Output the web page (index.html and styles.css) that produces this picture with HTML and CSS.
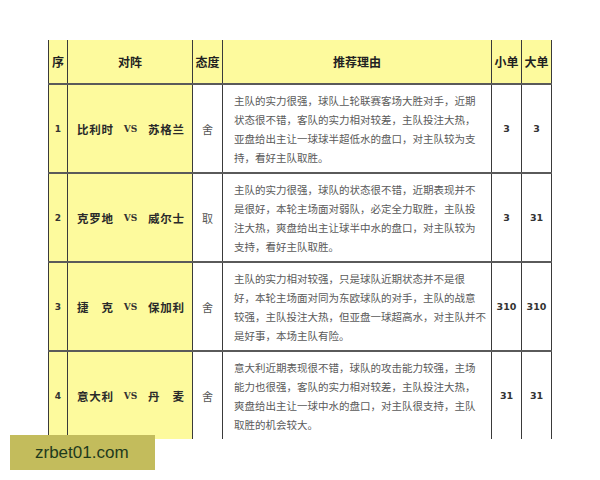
FILE: index.html
```html
<!DOCTYPE html>
<html>
<head>
<meta charset="utf-8">
<link rel="stylesheet" href="styles.css">
</head>
<body>
<div class="page">
  <div class="clip">
    <table class="picks">
      <colgroup>
        <col class="c-no"><col class="c-match"><col class="c-att"><col class="c-reason"><col class="c-small"><col class="c-big">
      </colgroup>
      <thead>
        <tr>
          <th>序</th><th>对阵</th><th>态度</th><th class="hr">推荐理由</th><th>小单</th><th>大单</th>
        </tr>
      </thead>
      <tbody>
        <tr>
          <td class="no">1</td>
          <td class="match"><div class="teams"><span class="team">比利时</span><span class="vs">VS</span><span class="team">苏格兰</span></div></td>
          <td class="att">舍</td>
          <td class="reason">主队的实力很强，球队上轮联赛客场大胜对手，近期<br>状态很不错，客队的实力相对较差，主队投注大热，<br>亚盘给出主让一球球半超低水的盘口，对主队较为支<br>持，看好主队取胜。</td>
          <td class="num">3</td><td class="num">3</td>
        </tr>
        <tr>
          <td class="no">2</td>
          <td class="match"><div class="teams"><span class="team">克罗地</span><span class="vs">VS</span><span class="team">威尔士</span></div></td>
          <td class="att">取</td>
          <td class="reason">主队的实力很强，球队的状态很不错，近期表现并不<br>是很好，本轮主场面对弱队，必定全力取胜，主队投<br>注大热，爽盘给出主让球半中水的盘口，对主队较为<br>支持，看好主队取胜。</td>
          <td class="num">3</td><td class="num">31</td>
        </tr>
        <tr>
          <td class="no">3</td>
          <td class="match"><div class="teams"><span class="team">捷克</span><span class="vs">VS</span><span class="team">保加利</span></div></td>
          <td class="att">舍</td>
          <td class="reason">主队的实力相对较强，只是球队近期状态并不是很<br>好，本轮主场面对同为东欧球队的对手，主队的战意<br>较强，主队投注大热，但亚盘一球超高水，对主队并不<br>是好事，本场主队有险。</td>
          <td class="num">310</td><td class="num">310</td>
        </tr>
        <tr>
          <td class="no">4</td>
          <td class="match"><div class="teams"><span class="team">意大利</span><span class="vs">VS</span><span class="team">丹麦</span></div></td>
          <td class="att">舍</td>
          <td class="reason">意大利近期表现很不错，球队的攻击能力较强，主场<br>能力也很强，客队的实力相对较差，主队投注大热，<br>爽盘给出主让一球中水的盘口，对主队很支持，主队<br>取胜的机会较大。</td>
          <td class="num">31</td><td class="num">31</td>
        </tr>
      </tbody>
    </table>
  </div>
  <div class="watermark">zrbet01.com</div>
</div>
</body>
</html>
```
FILE: styles.css
```css
html, body {
  margin: 0;
  padding: 0;
  background: #ffffff;
}
.page {
  position: relative;
  width: 600px;
  height: 480px;
  padding: 40px 0 0 48px;
  box-sizing: border-box;
  font-family: "Noto Sans CJK SC", "Noto Sans", sans-serif;
}
.clip {
  width: 504px;
  height: 399px;
  overflow: hidden;
}
.picks {
  border-collapse: collapse;
  table-layout: fixed;
  width: 503px;
}
.c-no { width: 19px; }
.c-match { width: 125px; }
.c-att { width: 30px; }
.c-reason { width: 269px; }
.c-small { width: 30px; }
.c-big { width: 30px; }
.picks th, .picks td {
  border-left: 1px solid #3a3a3a;
  border-right: 1px solid #3a3a3a;
  border-bottom: 2px solid #5a5a5a;
  padding: 0;
}
.picks th {
  background: #fdfa9d;
  height: 43px;
  font-size: 12px;
  font-weight: bold;
  color: #222;
  text-align: center;
  vertical-align: middle;
}
.picks td {
  height: 87px;
  vertical-align: middle;
}
.no {
  background: #fdfa9d;
  text-align: center;
  font-family: "DejaVu Sans", sans-serif;
  font-weight: bold;
  font-size: 9px;
  color: #333;
}
.match {
  background: #fdfa9d;
}
.teams {
  display: flex;
  justify-content: space-between;
  align-items: center;
  padding: 0 8px 0 9px;
}
.team {
  flex: none;
  width: 36px;
  white-space: nowrap;
  font-size: 11.5px;
  font-weight: bold;
  color: #2a2a2a;
  text-align: justify;
  text-align-last: justify;
}
.vs {
  font-family: "DejaVu Serif", serif;
  font-size: 9px;
  font-weight: bold;
  color: #333;
}
.att {
  text-align: center;
  font-size: 11px;
  color: #555;
}
.reason {
  padding-left: 11px !important;
  font-size: 10.5px;
  line-height: 19px;
  color: #5a5a5a;
  white-space: nowrap;
}
.num {
  text-align: center;
  font-family: "DejaVu Sans", sans-serif;
  font-weight: bold;
  font-size: 9.5px;
  color: #333;
}
.watermark {
  position: absolute;
  left: 10px;
  top: 435px;
  width: 145px;
  height: 35px;
  background: #c3bc5c;
  color: #1f3a1c;
  font-family: "Liberation Sans", Arial, sans-serif;
  font-size: 17px;
  line-height: 35px;
  padding-left: 25px;
  box-sizing: border-box;
}
```
